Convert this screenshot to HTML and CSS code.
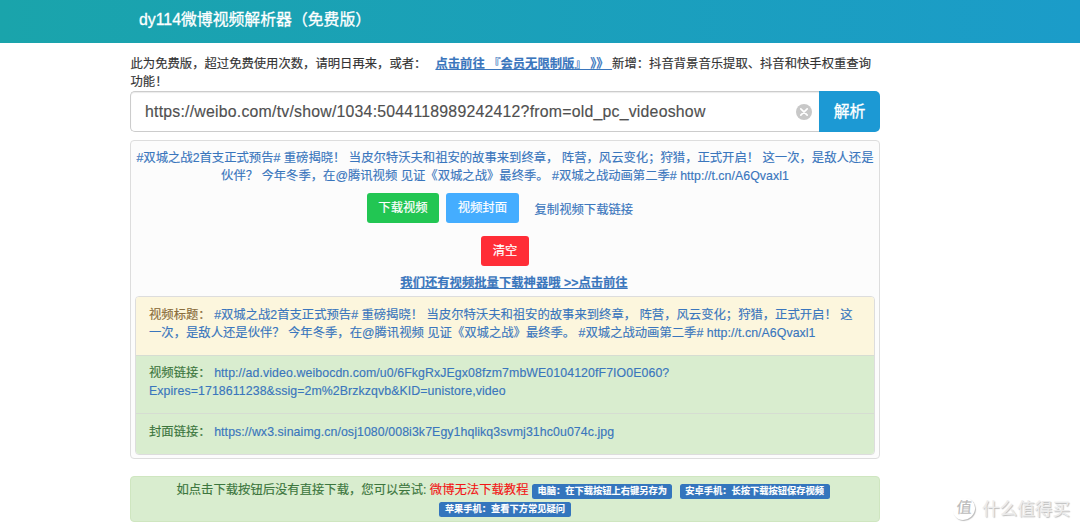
FILE: index.html
```html
<!DOCTYPE html>
<html lang="zh-CN">
<head>
    <meta charset="UTF-8">
    <meta name="viewport" content="width=device-width, initial-scale=1.0">
    <title>dy114微博视频解析器（免费版）</title>
    <link rel="stylesheet" href="styles.css">
</head>
<body>

    <header class="navbar">
        <div class="container">
            <a class="navbar-brand">dy114微博视频解析器（免费版）</a>
        </div>
    </header>

    <main class="container">
        <p class="notice">此为免费版，超过免费使用次数，请明日再来，或者：<a class="vip-link" href="#">点击前往 『会员无限制版』 》》&nbsp;</a>新增：抖音背景音乐提取、抖音和快手权重查询<br>功能！</p>

        <form class="input-group">
            <div class="input-wrap">
                <input class="url-input" type="text" aria-label="url" value="https://weibo.com/tv/show/1034:5044118989242412?from=old_pc_videoshow">
                <svg class="clear-icon" viewBox="0 0 16 16">
                    <circle cx="8" cy="8" r="8" fill="#c8c8c8"/>
                    <path d="M4.8 4.8l6.4 6.4M11.2 4.8l-6.4 6.4" stroke="#fff" stroke-width="1.7" stroke-linecap="round"/>
                </svg>
            </div>
            <button class="btn-parse" type="button">解析</button>
        </form>

        <section class="result">
            <p class="video-title"><a href="#">#双城之战2首支正式预告# 重磅揭晓！ 当皮尔特沃夫和祖安的故事来到终章， 阵营，风云变化；狩猎，正式开启！ 这一次，是敌人还是<br>伙伴？ 今年冬季，在@腾讯视频 见证《双城之战》最终季。 #双城之战动画第二季# <span class="short-url">http://t.cn/A6Qvaxl1</span></a></p>

            <div class="btn-row btn-row-main">
                <a class="btn btn-success">下载视频</a>
                <a class="btn btn-info">视频封面</a>
                <a class="copy-link" href="#">复制视频下载链接</a>
            </div>
            <div class="btn-row">
                <a class="btn btn-danger">清空</a>
            </div>
            <p class="batch"><a href="#">我们还有视频批量下载神器哦 &gt;&gt;点击前往</a></p>

            <ul class="list-group">
                <li class="item item-warning"><span class="item-name">视频标题：</span><a href="#">#双城之战2首支正式预告# 重磅揭晓！ 当皮尔特沃夫和祖安的故事来到终章， 阵营，风云变化；狩猎，正式开启！ 这<br>一次，是敌人还是伙伴？ 今年冬季，在@腾讯视频 见证《双城之战》最终季。 #双城之战动画第二季# <span class="short-url">http://t.cn/A6Qvaxl1</span></a></li>
                <li class="item item-success"><span class="item-name">视频链接：</span><a class="url" href="#">http://ad.video.weibocdn.com/u0/6FkgRxJEgx08fzm7mbWE0104120fF7IO0E060?<br>Expires=1718611238&amp;ssig=2m%2Brzkzqvb&amp;KID=unistore,video</a></li>
                <li class="item item-success"><span class="item-name">封面链接：</span><a class="url" href="#">https://wx3.sinaimg.cn/osj1080/008i3k7Egy1hqlikq3svmj31hc0u074c.jpg</a></li>
            </ul>
        </section>

        <div class="alert">
            如点击下载按钮后没有直接下载，您可以尝试: <a class="help-link" href="#">微博无法下载教程</a> <span class="label">电脑：在下载按钮上右键另存为</span> <span class="label label-gap">安卓手机：长按下载按钮保存视频</span><br>
            <span class="label">苹果手机：查看下方常见疑问</span>
        </div>
    </main>

    <div class="watermark">
        <span class="watermark-logo">值</span>
        <span>什么值得买</span>
    </div>

</body>
</html>
```

FILE: styles.css
```css
* {
    box-sizing: border-box;
}
body {
    margin: 0;
    height: 531px;
    overflow: hidden;
    font-family: "Liberation Sans", "Noto Sans CJK SC", sans-serif;
    font-size: 12.34px;
    line-height: 17.8px;
    color: #333;
    background: #fff;
    -webkit-text-stroke: 0.15px;
}
a {
    color: #3a76bd;
    text-decoration: none;
}
p {
    margin: 0;
    white-space: nowrap;
}
.container {
    width: 750px;
    margin-left: 130px;
}
.navbar {
    height: 43px;
    background: linear-gradient(90deg, #1aa4ab, #1b9cc9);
}
.navbar-brand {
    display: block;
    padding-left: 9px;
    font-size: 15.85px;
    line-height: 40px;
    color: #fff;
    -webkit-text-stroke: 0.3px;
}
.notice {
    height: 48px;
    padding-top: 13px;
    padding-left: 0.5px;
}
.vip-link {
    margin-left: 9px;
    font-weight: bold;
    text-decoration: underline;
}

/* url box */
.input-group {
    display: flex;
    height: 41px;
}
.input-wrap {
    display: flex;
    flex: 1;
    align-items: center;
    padding: 0 7px 0 14px;
    border: 1px solid #ccc;
    border-right: none;
    border-radius: 5px 0 0 5px;
    box-shadow: inset 0 1px 1px rgba(0,0,0,0.08);
}
.url-input {
    flex: 1;
    padding: 0;
    border: none;
    outline: none;
    background: none;
    font-family: inherit;
    font-size: 15.85px;
    letter-spacing: 0.22px;
    color: #505050;
}
.clear-icon {
    width: 16px;
    height: 16px;
}
.btn-parse {
    width: 61px;
    padding: 0 0 2px;
    border: none;
    border-radius: 0 5px 5px 0;
    background: #1c99d4;
    color: #fff;
    font-family: inherit;
    font-size: 15.85px;
    -webkit-text-stroke: 0.3px;
}

/* result panel */
.result {
    height: 319px;
    margin-top: 8px;
    padding: 8px 4px 0;
    border: 1px solid #ddd;
    border-radius: 4px;
    background: #fcfcfc;
    text-align: center;
}
.video-title {
    height: 36px;
    padding-top: 1px;
}
.short-url {
    letter-spacing: 0.06px;
}
.btn-row {
    display: flex;
    justify-content: center;
    gap: 7px;
    height: 30px;
    margin-top: 8px;
    margin-bottom: 9px;
}
.btn-row-main {
    padding-right: 10px;
    margin-bottom: 12.5px;
}
.btn-row-main + .btn-row {
    margin-top: 0;
}
.btn {
    height: 30px;
    padding: 0 11.5px;
    border-radius: 3px;
    line-height: 31px;
    color: #fff;
    -webkit-text-stroke: 0.2px;
}
.btn-success {
    background: #22c653;
}
.btn-info {
    background: #44adff;
}
.btn-danger {
    background: #ff2d37;
}
.copy-link {
    margin-left: 9px;
    line-height: 34px;
}
.batch {
    padding-left: 18px;
}
.batch a {
    font-weight: bold;
    text-decoration: underline;
}
.list-group {
    margin: 4px 0 0;
    padding: 0;
    list-style: none;
    border: 1px solid #ddd;
    border-radius: 4px;
    overflow: hidden;
    text-align: left;
    white-space: nowrap;
}
.item {
    height: 58.5px;
    padding: 9.5px 13px 0;
    border-bottom: 1px solid #d6ddd2;
}
.item:last-child {
    height: 40px;
    border-bottom: none;
}
.item-name {
    margin-right: 3.5px;
}
.url {
    letter-spacing: 0.09px;
}
.item-warning {
    background: #fcf6dd;
    color: #8a6d3b;
}
.item-success {
    background: #d9edcf;
    color: #3c763d;
}

/* help box */
.alert {
    height: 46px;
    margin-top: 17px;
    padding-top: 5px;
    border: 1px solid #cfe6c0;
    border-radius: 4px;
    background: #d9edcf;
    color: #3c763d;
    text-align: center;
    white-space: nowrap;
}
.help-link {
    color: #f21616;
}
.label {
    display: inline-block;
    height: 15px;
    padding: 0 5.5px;
    border-radius: 2.5px;
    background: #3475bd;
    color: #fff;
    font-size: 9.25px;
    font-weight: bold;
    line-height: 14px;
}
.label-gap {
    margin-left: 4px;
    margin-right: 4px;
}

/* site mark in the corner, over the page */
.watermark {
    position: absolute;
    right: 10px;
    bottom: 10px;
    display: flex;
    align-items: center;
    gap: 7px;
    font-size: 17.6px;
    line-height: 24px;
    color: #ececec;
    text-shadow: 1px 1px 1px #bbb;
}
.watermark-logo {
    width: 22px;
    height: 22px;
    border-radius: 50%;
    box-shadow: 1px 1px 1px #bbb;
    color: #bbb;
    font-size: 15.5px;
    line-height: 20px;
    text-align: center;
    text-shadow: none;
    transform: skewX(-5deg);
}
```
